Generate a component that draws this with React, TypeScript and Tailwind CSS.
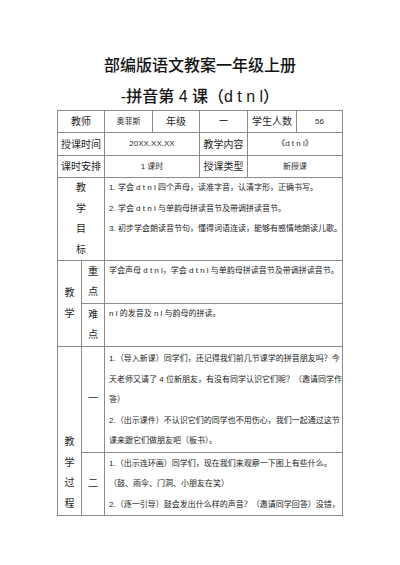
import React from 'react';

const cell = 'border border-[#8c8c8c] p-0 text-center';
const mid = `${cell} align-middle`;
const top = `${cell} align-top`;
const label = 'text-[10px] text-[#1f1f1f]';
const value = 'text-[8px] text-[#2a2a2a]';

function Stack({ chars }: { chars: string[] }) {
  return (
    <div className="flex flex-col items-center text-[10px] leading-[20.5px] text-[#1f1f1f]">
      {chars.map((c, i) => (
        <span key={i}>{c}</span>
      ))}
    </div>
  );
}

function Lines({ lines, pt = 'pt-0' }: { lines: string[]; pt?: string }) {
  return (
    <div className={`flex flex-col pl-[4px] text-left text-[8px] leading-[20.5px] text-[#222] ${pt}`}>
      {lines.map((l, i) => (
        <div key={i} className="whitespace-nowrap">
          {l}
        </div>
      ))}
    </div>
  );
}

export default function App() {
  return (
    <div className="min-h-[565px] w-[400px] bg-white font-['Liberation_Sans','Noto_Sans_CJK_SC',sans-serif]">
      <div className="flex flex-col items-center pt-[54px] text-[16px] font-medium leading-[24px] text-[#141414]">
        <div>部编版语文教案一年级上册</div>
        <div className="mt-[7px]">-拼音第 4 课（d t n l）</div>
      </div>

      <table className="mx-auto mt-px w-[286px] table-fixed border-collapse">
        <colgroup>
          <col className="w-[24px]" />
          <col className="w-[23px]" />
          <col className="w-[48px]" />
          <col className="w-[47px]" />
          <col className="w-[48px]" />
          <col className="w-[49px]" />
          <col className="w-[46px]" />
        </colgroup>
        <tbody>
          <tr className="h-[22px]">
            <td colSpan={2} className={`${mid} ${label}`}>教师</td>
            <td className={`${mid} ${value}`}>奥菲斯</td>
            <td className={`${mid} ${label}`}>年级</td>
            <td className={`${mid} text-[9px]`}>一</td>
            <td className={`${mid} ${label}`}>学生人数</td>
            <td className={`${mid} ${value}`}>56</td>
          </tr>
          <tr className="h-[23px]">
            <td colSpan={2} className={`${mid} ${label}`}>授课时间</td>
            <td colSpan={2} className={`${mid} ${value}`}>20XX.XX.XX</td>
            <td className={`${mid} ${label}`}>教学内容</td>
            <td colSpan={2} className={`${mid} ${value}`}>《d t n l》</td>
          </tr>
          <tr className="h-[22px]">
            <td colSpan={2} className={`${mid} ${label}`}>课时安排</td>
            <td colSpan={2} className={`${mid} ${value}`}>1 课时</td>
            <td className={`${mid} ${label}`}>授课类型</td>
            <td colSpan={2} className={`${mid} ${value}`}>新授课</td>
          </tr>
          <tr className="h-[81px]">
            <td colSpan={2} className={mid}>
              <Stack chars={['教', '学', '目', '标']} />
            </td>
            <td colSpan={5} className={top}>
              <Lines
                lines={[
                  '1. 学会 d t n l 四个声母，读准字音，认清字形，正确书写。',
                  '2. 学会 d t n l 与单韵母拼读音节及带调拼读音节。',
                  '3. 初步学会朗读音节句，懂得词语连读，能够有感情地朗读儿歌。',
                ]}
              />
            </td>
          </tr>
          <tr className="h-[43px]">
            <td rowSpan={2} className={mid}>
              <Stack chars={['教', '学']} />
            </td>
            <td className={mid}>
              <Stack chars={['重', '点']} />
            </td>
            <td colSpan={5} className={top}>
              <Lines lines={['学会声母 d t n l，学会 d t n l 与单韵母拼读音节及带调拼读音节。']} />
            </td>
          </tr>
          <tr className="h-[43px]">
            <td className={mid}>
              <Stack chars={['难', '点']} />
            </td>
            <td colSpan={5} className={top}>
              <Lines lines={['n l 的发音及 n l 与韵母的拼读。']} />
            </td>
          </tr>
          <tr className="h-[105px]">
            <td rowSpan={2} className={`${cell} align-bottom`}>
              <div className="pb-[1px]">
                <Stack chars={['教', '学', '过', '程']} />
              </div>
            </td>
            <td className={mid}>
              <Stack chars={['一']} />
            </td>
            <td colSpan={5} className={top}>
              <Lines
                pt="pt-[2px]"
                lines={[
                  '1.（导入新课）同学们，还记得我们前几节课学的拼音朋友吗？今',
                  '天老师又请了 4 位新朋友，有没有同学认识它们呢？（邀请同学作',
                  '答）',
                  '2.（出示课件）不认识它们的同学也不用伤心，我们一起通过这节',
                  '课来跟它们做朋友吧（板书）。',
                ]}
              />
            </td>
          </tr>
          <tr className="h-[62px]">
            <td className={mid}>
              <Stack chars={['二']} />
            </td>
            <td colSpan={5} className={top}>
              <Lines
                pt="pt-px"
                lines={[
                  '1.（出示连环画）同学们，现在我们来观察一下图上有些什么。',
                  '（鼓、雨伞、门洞、小朋友在笑）',
                  '2.（逐一引导）鼓会发出什么样的声音？（邀请同学回答）没错，',
                ]}
              />
            </td>
          </tr>
        </tbody>
      </table>
    </div>
  );
}
